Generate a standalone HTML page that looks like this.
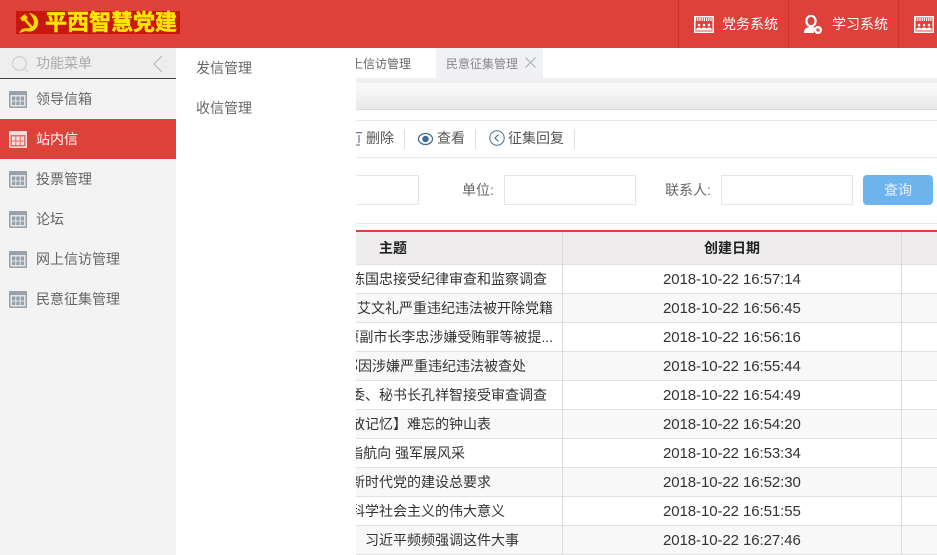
<!DOCTYPE html>
<html lang="zh-CN"><head><meta charset="utf-8"><title>平西智慧党建</title>
<style>
*{margin:0;padding:0;box-sizing:border-box}
html,body{width:937px;height:555px;overflow:hidden;background:#fff}
body{position:relative;font-family:"Liberation Sans","Noto Sans CJK SC",sans-serif;font-size:14px;color:#333}
.a{position:absolute;white-space:nowrap}
.t{line-height:20px;height:20px}
#hd{left:0;top:0;width:937px;height:48px;background:#dd4139}
.sep{top:0;width:1px;height:48px;background:#c9342e}
.nav{color:#fff;top:14px}
#side{left:0;top:48px;width:176px;height:507px;background:#f3f3f4}
.mi{left:36px;color:#666}
.ic{position:absolute;left:9px}
#main{left:356px;top:48px;width:581px;height:507px;overflow:hidden;background:#fff}
.row{position:absolute;left:0;width:581px;height:29px;border-bottom:1px solid #e1e1e1}
.row.e{background:#f8f8f8}
.row .s{position:absolute;right:0;top:4px;line-height:20px;white-space:nowrap;color:#333}
.row .d{position:absolute;left:307px;top:5px;line-height:20px;font-size:15px;letter-spacing:-.08px;color:#333;white-space:nowrap}
.sub{position:absolute;left:0;top:0;width:206px;height:29px;overflow:hidden}
.vl{position:absolute;top:184px;width:1px;height:323px;background:#dcdcdc}
.ip{position:absolute;top:127px;height:30px;border:1px solid #e6e6e6;background:#fff}
.lb{position:absolute;top:132px;line-height:20px;color:#666;white-space:nowrap}
.tb{position:absolute;top:80px;line-height:20px;color:#555;white-space:nowrap}
.ts{position:absolute;top:81px;width:1px;height:20px;background:#ddd}
</style></head><body>
<svg width="0" height="0" style="position:absolute"><defs>
<symbol id="grid" viewBox="0 0 18 17"><rect width="18" height="17" rx="1" fill="#98a1aa"/><rect x="1.500" y="4" width="15" height="11.500" fill="#e4e6e8"/><path d="M3 5.500h3.300v4H3zM7.300 5.500h3.400v4H7.300zM11.700 5.500H15v4h-3.300zM3 10.500h3.300v3.500H3zM7.300 10.500h3.400v3.500H7.300zM11.700 10.500H15v3.500h-3.300z" fill="#98a1aa"/></symbol>
<symbol id="sys" viewBox="0 0 20 17"><rect x=".8" y=".8" width="18.400" height="15.400" fill="none" stroke="#fff" stroke-width="1.500"/><path d="M1 3.500H19" stroke="#fff" stroke-width="3" stroke-dasharray="1.200 1"/><circle cx="5" cy="9" r="1.300" fill="#fff"/><circle cx="10" cy="9" r="1.300" fill="#fff"/><circle cx="15" cy="9" r="1.300" fill="#fff"/><path d="M2 14.500c0-4 6-4 6 0zM7 14.500c0-4 6-4 6 0zM12 14.500c0-4 6-4 6 0z" fill="#fff"/></symbol>
</defs></svg>
<div class="a" id="hd">
  <div class="a" style="left:16px;top:11px;width:164px;height:23px;background:#c8170f"></div>
  <svg class="a" style="left:17px;top:12px" width="24" height="22" viewBox="0 0 24 22"><path d="M12 1C19 2 22 7 21 12 20 18 14 21 9 19L2 21 5 17C9 16 13 17 16 14 18 11 17 6 12 1Z" fill="#ffd800"/><path d="M3 6L8 2 11 6 9 7 17 16 15 17.500 7 8.500 5.500 9.500Z" fill="#ffd800"/></svg>
  <div class="a" style="left:45px;top:10px;line-height:26px;font-size:22px;font-weight:700;color:#ffe600;-webkit-text-stroke:.5px #ffe600">平西智慧党建</div>
  <div class="a sep" style="left:678px"></div><div class="a sep" style="left:788px"></div><div class="a sep" style="left:898px"></div>
  <svg class="a" style="left:694px;top:16px" width="20" height="17"><use href="#sys"/></svg>
  <div class="a t nav" style="left:722px">党务系统</div>
  <svg class="a" style="left:803px;top:15px" width="20" height="20" viewBox="0 0 20 20"><ellipse cx="8" cy="6" rx="4.600" ry="5.200" fill="none" stroke="#fff" stroke-width="2.200"/><path d="M1 18c0-5 3-6 7-6 2 0 3 .3 4 1-1 1-1.500 3-1 5z" fill="#fff"/><circle cx="15" cy="15" r="4" fill="#fff"/><path d="M13 15h4M15 13v4" stroke="#dd4139" stroke-width="1.200"/></svg>
  <div class="a t nav" style="left:832px">学习系统</div>
  <svg class="a" style="left:914px;top:16px" width="20" height="17"><use href="#sys"/></svg>
</div>

<div class="a" id="side">
  <div class="a" style="left:0;top:0;width:176px;height:31px;background:#eeeeee;border-bottom:1px solid #444"></div>
  <svg class="a" style="left:11px;top:7px" width="19" height="19" viewBox="0 0 19 19"><circle cx="8.500" cy="8.500" r="6.800" fill="none" stroke="#ccc" stroke-width="1.100"/><path d="M13.500 13.500L17 17" stroke="#ccc" stroke-width="1.100"/></svg>
  <div class="a t" style="left:36px;top:5px;color:#aaa">功能菜单</div>
  <svg class="a" style="left:152px;top:7px" width="11" height="18" viewBox="0 0 11 18"><path d="M10 1L2 9l8 8" fill="none" stroke="#bbb" stroke-width="1.200"/></svg>

  <svg class="ic" style="top:43px" width="18" height="17"><use href="#grid"/></svg>
  <div class="a t mi" style="top:41px">领导信箱</div>

  <div class="a" style="left:0;top:71px;width:176px;height:40px;background:#dd4139"></div>
  <svg class="ic" style="top:83px" width="18" height="17" viewBox="0 0 18 17"><rect width="18" height="17" rx="1" fill="#fbdedb"/><rect x="1.500" y="4" width="15" height="11.500" fill="#e4706a"/><path d="M3 5.500h3.300v4H3zM7.300 5.500h3.400v4H7.300zM11.700 5.500H15v4h-3.300zM3 10.500h3.300v3.500H3zM7.300 10.500h3.400v3.500H7.300zM11.700 10.500H15v3.500h-3.300z" fill="#fbdedb"/></svg>
  <div class="a t" style="left:36px;top:81px;color:#fff">站内信</div>

  <svg class="ic" style="top:123px" width="18" height="17"><use href="#grid"/></svg>
  <div class="a t mi" style="top:121px">投票管理</div>
  <svg class="ic" style="top:163px" width="18" height="17"><use href="#grid"/></svg>
  <div class="a t mi" style="top:161px">论坛</div>
  <svg class="ic" style="top:203px" width="18" height="17"><use href="#grid"/></svg>
  <div class="a t mi" style="top:201px">网上信访管理</div>
  <svg class="ic" style="top:243px" width="18" height="17"><use href="#grid"/></svg>
  <div class="a t mi" style="top:241px">民意征集管理</div>
</div>

<div class="a t" style="left:196px;top:58px;color:#666">发信管理</div>
<div class="a t" style="left:196px;top:98px;color:#666">收信管理</div>

<div class="a" id="main">
  <!-- tabs -->
  <div class="a" style="left:-55px;top:6px;line-height:20px;font-size:12px;color:#666;width:110px;text-align:right">网上信访管理</div>
  <div class="a" style="left:80px;top:0;width:107px;height:30px;background:#eff1f4"></div>
  <div class="a" style="left:90px;top:6px;line-height:20px;font-size:12px;color:#888">民意征集管理</div>
  <svg class="a" style="left:169px;top:9px" width="11" height="11" viewBox="0 0 11 11"><path d="M.5.5l10 10M10.500.5l-10 10" stroke="#aaa" stroke-width="1"/></svg>
  <div class="a" style="left:0;top:30px;width:581px;height:5px;background:#f0f0f0"></div>
  <div class="a" style="left:0;top:35px;width:581px;height:27px;background:linear-gradient(#fbfbfb,#e9e9e9);border-bottom:1px solid #d8d8d8"></div>
  <div class="a" style="left:0;top:72px;width:581px;height:1px;background:#e8e8e8"></div>
  <!-- toolbar -->
  <svg class="a" style="left:0;top:84px" width="7" height="14" viewBox="0 0 7 14"><path d="M0 .7H6M3 3v8M0 13H4" fill="none" stroke="#668" stroke-width="1.100"/></svg>
  <div class="tb" style="left:10px">删除</div><div class="ts" style="left:48px"></div>
  <svg class="a" style="left:62px;top:84px" width="15" height="14" viewBox="0 0 15 14"><ellipse cx="7.500" cy="7" rx="7" ry="5.500" fill="none" stroke="#3d6a94" stroke-width="1.300"/><circle cx="7.500" cy="7" r="3.200" fill="#3d6a94"/></svg>
  <div class="tb" style="left:81px">查看</div><div class="ts" style="left:119px"></div>
  <svg class="a" style="left:133px;top:82px" width="16" height="16" viewBox="0 0 16 16"><circle cx="8" cy="8" r="7.200" fill="none" stroke="#4a7095" stroke-width="1"/><path d="M9.500 4.500L6 8l3.500 3.500" fill="none" stroke="#4a7095" stroke-width="1.200"/></svg>
  <div class="tb" style="left:152px">征集回复</div><div class="ts" style="left:218px"></div>
  <div class="a" style="left:0;top:109px;width:581px;height:1px;background:#e8e8e8"></div>
  <!-- form -->
  <div class="ip" style="left:-60px;width:123px"></div>
  <div class="lb" style="left:106px">单位:</div>
  <div class="ip" style="left:148px;width:132px"></div>
  <div class="lb" style="left:309px">联系人:</div>
  <div class="ip" style="left:365px;width:132px"></div>
  <div class="a" style="left:507px;top:127px;width:70px;height:30px;background:#6db3ee;border-radius:4px;color:#e8f3fd;text-align:center;line-height:30px">查询</div>
  <div class="a" style="left:0;top:175px;width:581px;height:1px;background:#e8e8e8"></div>
  <!-- table -->
  <div class="a" style="left:0;top:182px;width:581px;height:2px;background:#dd4139"></div>
  <div class="a" style="left:0;top:184px;width:581px;height:33px;background:#eeecec;border-bottom:1px solid #e1e1e1"></div>
  <div class="a" style="left:23px;top:190px;line-height:20px;font-weight:700;color:#222">主题</div>
  <div class="a" style="left:348px;top:190px;line-height:20px;font-weight:700;color:#222">创建日期</div>

  <div class="row" style="top:217px"><div class="sub"><div class="s" style="right:15px">陈国忠接受纪律审查和监察调查</div></div><div class="d">2018-10-22 16:57:14</div></div>
  <div class="row e" style="top:246px"><div class="sub"><div class="s" style="right:9px">丁艾文礼严重违纪违法被开除党籍</div></div><div class="d">2018-10-22 16:56:45</div></div>
  <div class="row" style="top:275px"><div class="sub"><div class="s" style="right:9px">原副市长李忠涉嫌受贿罪等被提...</div></div><div class="d">2018-10-22 16:56:16</div></div>
  <div class="row e" style="top:304px"><div class="sub"><div class="s" style="right:36px">部因涉嫌严重违纪违法被查处</div></div><div class="d">2018-10-22 16:55:44</div></div>
  <div class="row" style="top:333px"><div class="sub"><div class="s" style="right:15px">委、秘书长孔祥智接受审查调查</div></div><div class="d">2018-10-22 16:54:49</div></div>
  <div class="row e" style="top:362px"><div class="sub"><div class="s" style="right:71px">放记忆】难忘的钟山表</div></div><div class="d">2018-10-22 16:54:20</div></div>
  <div class="row" style="top:391px"><div class="sub"><div class="s" style="right:97px">指航向 强军展风采</div></div><div class="d">2018-10-22 16:53:34</div></div>
  <div class="row e" style="top:420px"><div class="sub"><div class="s" style="right:71px">新时代党的建设总要求</div></div><div class="d">2018-10-22 16:52:30</div></div>
  <div class="row" style="top:449px"><div class="sub"><div class="s" style="right:57px">科学社会主义的伟大意义</div></div><div class="d">2018-10-22 16:51:55</div></div>
  <div class="row e" style="top:478px"><div class="sub"><div class="s" style="right:43px">习近平频频强调这件大事</div></div><div class="d">2018-10-22 16:27:46</div></div>

  <div class="vl" style="left:206px"></div>
  <div class="vl" style="left:545px"></div>
</div>
</body></html>
